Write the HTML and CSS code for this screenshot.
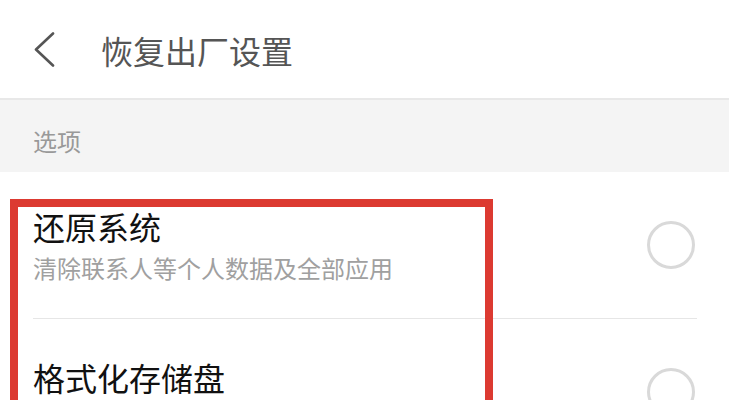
FILE: index.html
```html
<!DOCTYPE html>
<html lang="zh-CN">
<head>
    <meta charset="UTF-8">
    <meta name="viewport" content="width=device-width, initial-scale=1.0">
    <title>恢复出厂设置</title>
    <link rel="stylesheet" href="styles.css">
</head>
<body>

<div class="page">
    <!-- Header -->
    <div class="header">
        <span class="back">
            <svg width="22" height="36" viewBox="0 0 22 36">
                <polyline points="19,1.5 2,17.5 19,33.5" fill="none" stroke="#555" stroke-width="2.6" stroke-linecap="round" stroke-linejoin="round"/>
            </svg>
        </span>
        <h1 class="title">恢复出厂设置</h1>
    </div>

    <div class="section-label">选项</div>

    <div class="list">
        <div class="row">
            <div class="row-text">
                <div class="row-title">还原系统</div>
                <div class="row-sub">清除联系人等个人数据及全部应用</div>
            </div>
            <span class="radio"></span>
        </div>
        <div class="row">
            <div class="row-text row-text-short">
                <div class="row-title">格式化存储盘</div>
            </div>
            <span class="radio"></span>
        </div>
    </div>

    <!-- Red highlight annotation -->
    <div class="highlight"></div>
</div>

</body>
</html>
```

FILE: styles.css
```css
body {
    margin: 0;
    font-family: "Noto Sans CJK SC", "Noto Sans", sans-serif;
    background-color: #ffffff;
}
.page {
    position: relative;
    height: 400px;
    overflow: hidden;
}
.header {
    height: 100px;
    display: flex;
    align-items: center;
    padding: 2px 0 0 34px;
    box-sizing: border-box;
    border-bottom: 2px solid #e8e8e8;
}
.back {
    display: flex;
    width: 22px;
    height: 36px;
}
.title {
    margin: 0 0 0 45px;
    font-size: 32px;
    font-weight: normal;
    color: #555555;
    line-height: 1;
}
.section-label {
    height: 72px;
    background-color: #f4f4f4;
    color: #999999;
    font-size: 24px;
    line-height: 1;
    padding: 29px 0 0 33px;
    box-sizing: border-box;
}
.list {
    padding: 0 32px 0 33px;
}
.row {
    height: 146px;
    display: flex;
    align-items: center;
    justify-content: space-between;
    border-bottom: 1px solid #e6e6e6;
}
.row-text-short {
    padding-bottom: 30px;
}
.row-title {
    font-size: 32px;
    line-height: 1;
    color: #111111;
}
.row-sub {
    font-size: 24px;
    line-height: 1;
    color: #a0a0a0;
    margin-top: 14px;
}
.radio {
    width: 48px;
    height: 48px;
    border: 3px solid #d9d9d9;
    border-radius: 50%;
    box-sizing: border-box;
    margin-right: 2px;
}
.highlight {
    position: absolute;
    left: 10px;
    top: 199px;
    width: 483px;
    height: 260px;
    border: 8px solid #dc3a31;
    box-sizing: border-box;
}
```
